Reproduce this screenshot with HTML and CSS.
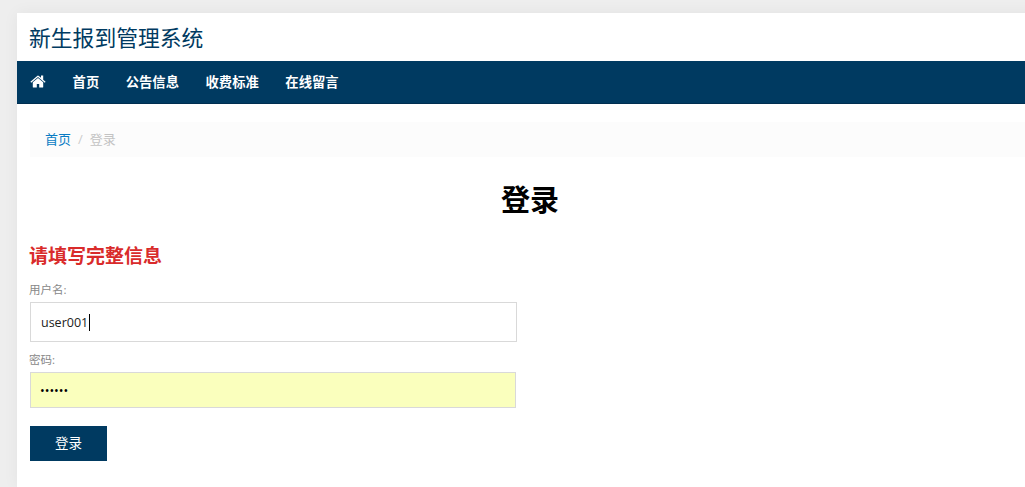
FILE: index.html
```
<!DOCTYPE html>
<html lang="zh-CN">
<head>
    <meta charset="UTF-8">
    <title>登录</title>
    <link rel="stylesheet" href="styles.css">
</head>
<body>
    <div class="page">
        <header class="header">
            <a class="logo" href="#">新生报到管理系统</a>
        </header>
        <nav class="navbar">
            <a class="home" href="#">
                <svg width="16" height="13" viewBox="0 0 16 13">
                    <path fill="#fff" d="M8 2.900 13.200 7.200V12a.6.600 0 0 1-.6.600H9.200V9H6.800v3.600H3.400a.6.600 0 0 1-.6-.6V7.200z"/>
                    <path fill="#fff" d="M11 .500h2.200v4.200l2.400 2-.8 1L8 2.100 1.200 7.700l-.8-1L7.200.900q.8-.6 1.600 0l2.200 1.800z"/>
                </svg>
            </a>
            <a href="#">首页</a>
            <a href="#">公告信息</a>
            <a href="#">收费标准</a>
            <a href="#">在线留言</a>
        </nav>
        <main class="container">
            <ol class="breadcrumb">
                <li><a href="#">首页</a></li>
                <li class="active">登录</li>
            </ol>
            <h1>登录</h1>
            <h4 class="error">请填写完整信息</h4>
            <form>
                <label for="username">用户名:</label>
                <div class="field">
                    <input type="text" id="username" value="user001">
                    <span class="caret"></span>
                </div>
                <label for="password">密码:</label>
                <div class="field">
                    <input class="autofill" type="password" id="password" value="123456">
                </div>
                <button type="button">登录</button>
            </form>
        </main>
    </div>
</body>
</html>
```
FILE: styles.css
```
* {
    box-sizing: border-box;
}
body {
    margin: 0;
    padding: 13px 0 0 17px;
    height: 487px;
    overflow: hidden;
    background: #eee;
    font-family: "Open Sans", "Noto Sans CJK SC", sans-serif;
    font-size: 13px;
}
a {
    text-decoration: none;
}
.page {
    width: 1026px;
    height: 474px;
    background: #fff;
    box-shadow: 0 0 15px rgba(0, 0, 0, 0.05);
}
.header {
    height: 48px;
    padding-left: 12px;
}
.logo {
    display: block;
    color: #003a61;
    font-size: 21.800px;
    font-weight: 400;
    line-height: 50px;
}
.navbar {
    display: flex;
    align-items: center;
    gap: 26.600px;
    height: 43px;
    padding-left: 13px;
    background: #003a61;
    border-bottom: 1px solid #002e50;
}
.navbar a {
    color: #fff;
    font-size: 13.300px;
    font-weight: bold;
    line-height: 42px;
}
.navbar .home {
    display: flex;
    width: 16px;
    margin-top: -2px;
}
.container {
    padding: 18px 13px 0;
}
.breadcrumb {
    display: flex;
    height: 35px;
    margin: 0;
    padding: 0 15px;
    list-style: none;
    line-height: 34px;
    background: #fcfcfc;
}
.breadcrumb a {
    color: #0a7cc4;
}
.breadcrumb .active {
    color: #c3c3c3;
}
.breadcrumb .active::before {
    content: "/";
    padding: 0 7px;
    color: #ccc;
}
h1 {
    margin: 21px 0 0;
    color: #000;
    font-size: 29px;
    line-height: 43px;
    text-align: center;
}
.error {
    margin: 21px 0 0 -1px;
    color: #d92b2b;
    font-size: 19px;
    line-height: 28px;
}
label {
    display: block;
    height: 18px;
    margin: 10px 0 0 -1px;
    color: #888;
    font-size: 11.500px;
    line-height: 16px;
}
.error + form label:first-child {
    margin-top: 12px;
}
.field {
    position: relative;
}
input {
    display: block;
    width: 487px;
    height: 40px;
    margin-top: 2px;
    padding: 0 10px;
    border: 1px solid #d9d9d9;
    outline: none;
    color: #222;
    background: #fff;
    font-family: inherit;
    font-size: 12.500px;
}
.autofill {
    width: 486px;
    height: 36px;
    padding: 0 9px;
    color: #000;
    background: #faffbd;
}
.caret {
    position: absolute;
    left: 59px;
    top: 12px;
    width: 1px;
    height: 17px;
    background: #000;
}
button {
    display: block;
    width: 77px;
    height: 35px;
    margin-top: 18px;
    padding: 0 0 3px;
    border: 0;
    color: #fff;
    background: #003a61;
    font-family: inherit;
    font-size: 13.500px;
}
```
